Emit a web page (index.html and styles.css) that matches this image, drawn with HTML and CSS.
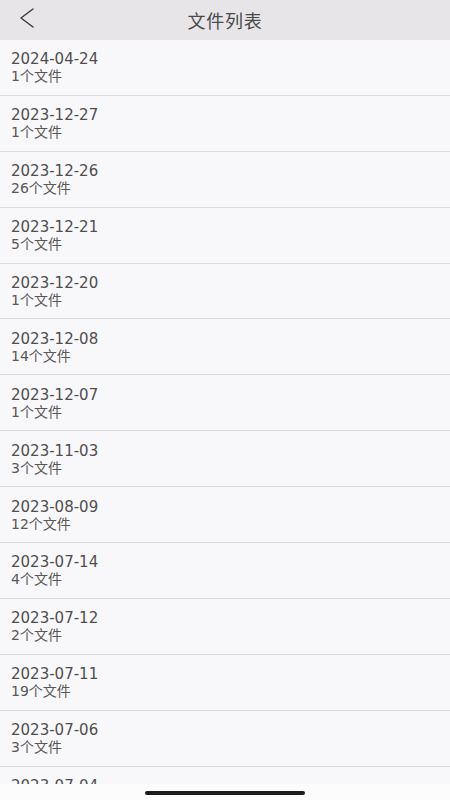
FILE: index.html
```html
<!DOCTYPE html>
<html lang="zh-CN">
<head>
    <meta charset="UTF-8">
    <meta name="viewport" content="width=device-width, initial-scale=1.0">
    <title>文件列表</title>
    <link rel="stylesheet" href="styles.css">
</head>
<body>
    <div class="screen">
        <div class="header">
            <a class="back" href="#">
                <svg width="16" height="22" viewBox="0 0 16 22">
                    <polyline points="14,2 2,11 14,20" fill="none" stroke="#3a3a3a" stroke-width="1.4" stroke-linecap="round" stroke-linejoin="round"/>
                </svg>
            </a>
            <h1 class="title">文件列表</h1>
        </div>

        <ul class="file-list" id="file_list"></ul>

        <div class="home-bar">
            <span class="indicator"></span>
        </div>
    </div>

    <script>
        // Date groups and how many files each one holds
        const groups = [
            ["2024-04-24", 1],
            ["2023-12-27", 1],
            ["2023-12-26", 26],
            ["2023-12-21", 5],
            ["2023-12-20", 1],
            ["2023-12-08", 14],
            ["2023-12-07", 1],
            ["2023-11-03", 3],
            ["2023-08-09", 12],
            ["2023-07-14", 4],
            ["2023-07-12", 2],
            ["2023-07-11", 19],
            ["2023-07-06", 3],
            ["2023-07-04", 2]
        ];

        function renderList() {
            const list = document.getElementById("file_list");
            groups.forEach(group => {
                let item = document.createElement("li");
                item.className = "file-row";
                item.innerHTML = `<span class="date">${group[0]}</span><span class="count">${group[1]}个文件</span>`;
                list.appendChild(item);
            });
        }

        renderList();
    </script>
</body>
</html>
```

FILE: styles.css
```css
* {
    box-sizing: border-box;
}

body {
    margin: 0;
    font-family: "DejaVu Sans", "Noto Sans CJK SC", sans-serif;
    background-color: #f8f7fa;
}

.screen {
    height: 800px;
    display: flex;
    flex-direction: column;
    overflow: hidden;
}

.header {
    height: 40px;
    flex-shrink: 0;
    background: #e7e5e8;
    display: flex;
    align-items: center;
    justify-content: center;
    position: relative;
}

.back {
    position: absolute;
    left: 19px;
    top: 7px;
    display: flex;
}

.title {
    margin: 0;
    font-family: "Noto Sans CJK SC", sans-serif;
    font-size: 18px;
    font-weight: 400;
    color: #4a4a4a;
    letter-spacing: 0.8px;
}

.file-list {
    flex: 1;
    margin: 0;
    padding: 0;
    list-style: none;
    overflow: hidden;
}

.file-row {
    height: 55.9px;
    padding: 1px 11px 0;
    border-bottom: 1.4px solid #dddbde;
    display: flex;
    flex-direction: column;
    justify-content: center;
}

.date {
    font-size: 15px;
    color: #4f4f4f;
    line-height: 18px;
}

.count {
    font-size: 14px;
    color: #585858;
    line-height: 17px;
}

.home-bar {
    height: 16px;
    flex-shrink: 0;
    background: #fdfcfd;
    display: flex;
    justify-content: center;
    padding-top: 7px;
}

.indicator {
    width: 160px;
    height: 4px;
    border-radius: 2px;
    background: #1c1c1c;
}
```
